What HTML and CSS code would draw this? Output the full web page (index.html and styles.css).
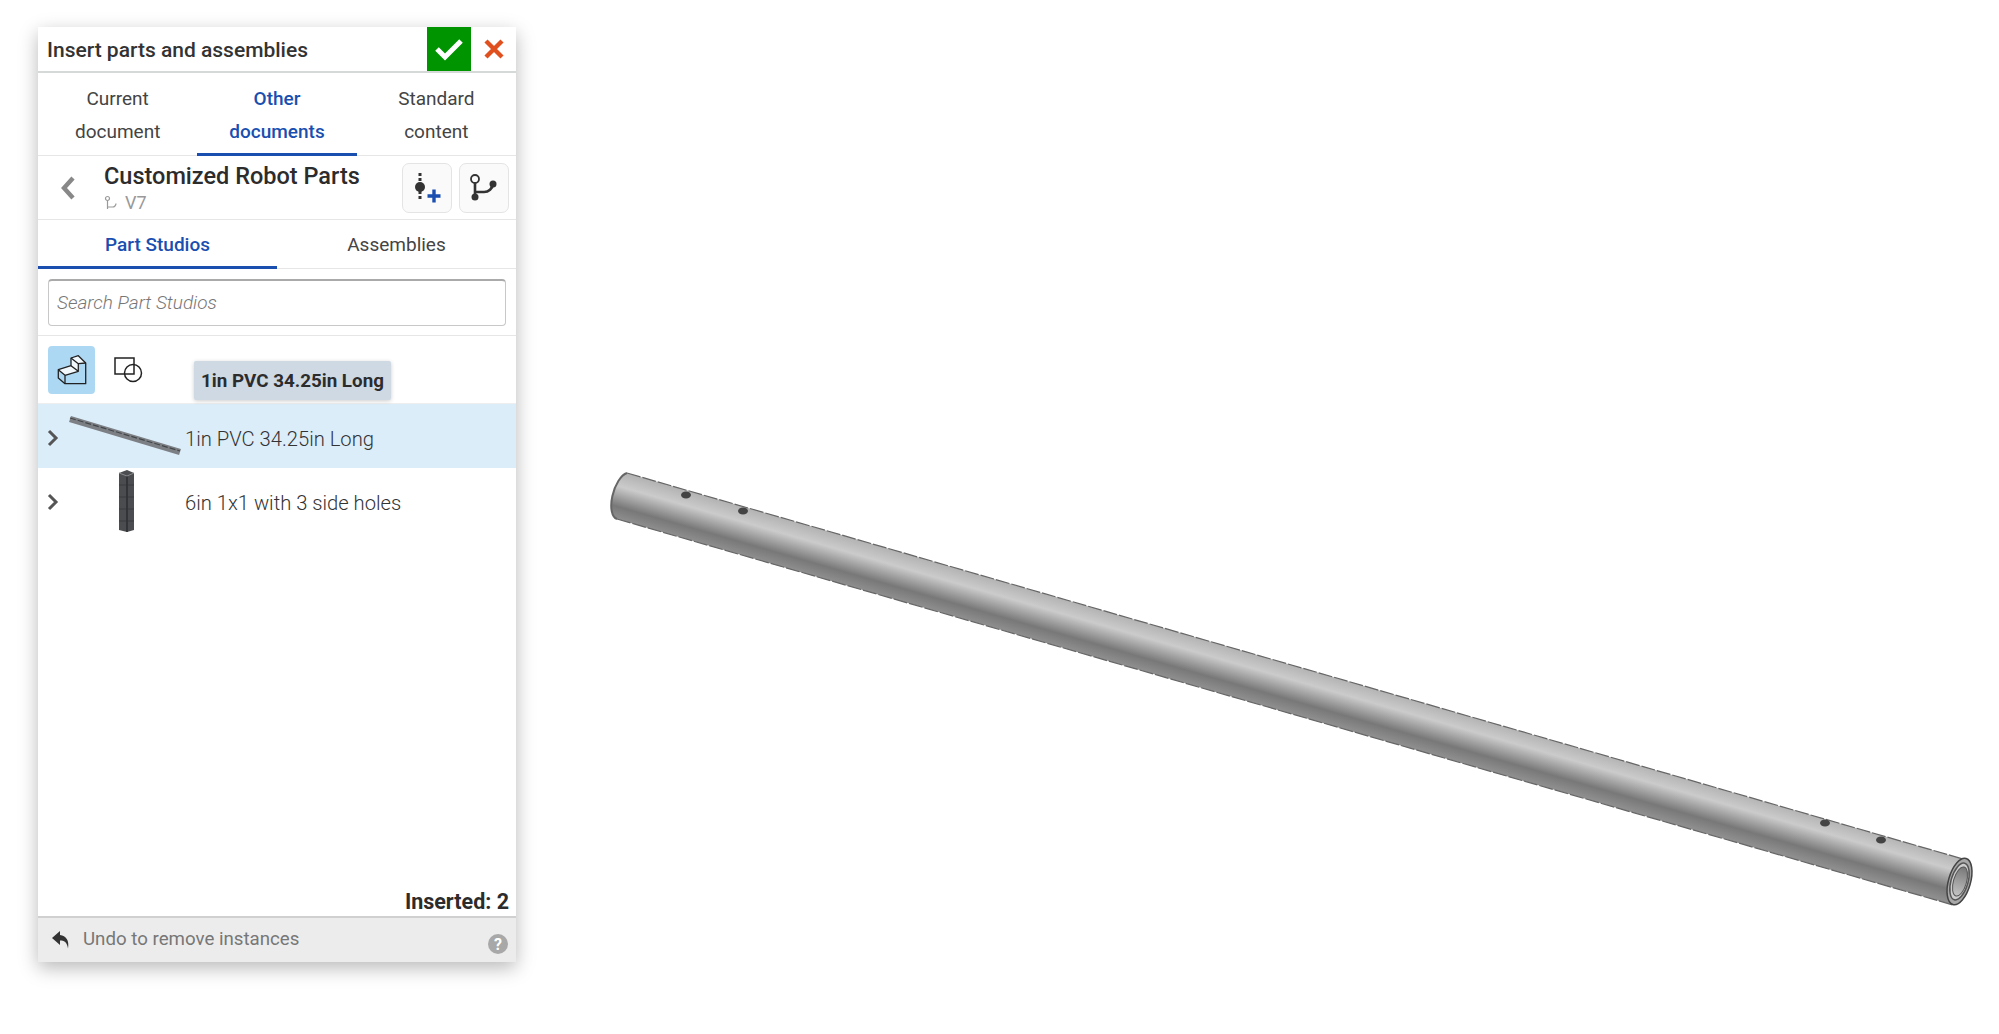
FILE: index.html
```html
<!DOCTYPE html>
<html lang="en">
<head>
<meta charset="utf-8">
<title>Insert parts and assemblies</title>
<link rel="stylesheet" href="styles.css">
</head>
<body>
<section class="panel">
  <header class="head">
    <h1 class="head-title">Insert parts and assemblies</h1>
    <button class="ok"><svg width="30" height="24" viewBox="0 0 30 24"><path d="M3 12l8 8L27 4" fill="none" stroke="#fff" stroke-width="5"/></svg></button>
    <button class="cancel"><svg width="20" height="20" viewBox="0 0 20 20"><path d="M2 2l16 16M18 2L2 18" fill="none" stroke="#e0501e" stroke-width="4.4"/></svg></button>
  </header>
  <nav class="tabs">
    <a class="tab">Current<br>document</a>
    <a class="tab tab-on">Other<br>documents</a>
    <a class="tab">Standard<br>content</a>
  </nav>
  <div class="doc">
    <svg class="back" width="16" height="26" viewBox="0 0 16 26"><path d="M13 3L4 13l9 10" fill="none" stroke="#888" stroke-width="4.4"/></svg>
    <div class="doc-text">
      <div class="doc-title">Customized Robot Parts</div>
      <div class="doc-ver"><svg width="14" height="16" viewBox="0 0 14 16"><g fill="none" stroke="#999" stroke-width="1.2"><circle cx="3.5" cy="3.5" r="2"/><path d="M3.5 5.500V14M3.5 12h5a3.500 3.500 0 0 0 3.500-3.500"/></g></svg>V7</div>
    </div>
    <button class="icon-btn"><svg width="30" height="34" viewBox="0 0 30 34"><path d="M8 2v9M8 20v10" stroke="#333" stroke-width="3" stroke-dasharray="3 2" fill="none"/><circle cx="8" cy="16" r="5" fill="#333"/><path d="M15.500 25h13M22 18.500v13" stroke="#1a4fb0" stroke-width="3.4" fill="none"/></svg></button>
    <button class="icon-btn"><svg width="28" height="30" viewBox="0 0 28 30"><g fill="none" stroke="#333"><circle cx="5" cy="6" r="4" stroke-width="1.800"/><path d="M5 10v14M5 19h9a9 9 0 0 0 9-8" stroke-width="2.600"/></g><circle cx="5" cy="24" r="3.500" fill="#333"/><circle cx="23" cy="11" r="3.500" fill="#333"/></svg></button>
  </div>
  <nav class="subtabs">
    <a class="subtab subtab-on">Part Studios</a>
    <a class="subtab">Assemblies</a>
  </nav>
  <div class="search-wrap">
    <div class="search">Search Part Studios</div>
  </div>
  <div class="filters">
    <button class="filter filter-on"><svg width="32" height="32" viewBox="0 0 32 32"><path d="M2.300 15.700L15 11.700 22.300 17.300 9 21.300zM15 4L22.300 1.700 29.700 9 22.300 9.700 22.300 17.300 15 11.700z" fill="#f2f9fd"/><g fill="none" stroke="#222" stroke-width="1.300" stroke-linejoin="round"><path d="M2.300 15.700L15 11.700V4L22.300 1.700 29.700 9V29.700H9L2.300 24z"/><path d="M2.300 15.700L9 21.300V29.700M9 21.300L22.300 17.300V9.700L15 4M22.300 9.700L29.700 9M15 11.700L22.300 17.300"/></g></svg></button>
    <button class="filter"><svg width="30" height="26" viewBox="0 0 30 26"><g fill="none" stroke="#222" stroke-width="1.500"><rect x="1" y="1" width="19" height="16"/><circle cx="19" cy="16" r="8.500"/></g></svg></button>
  </div>
  <ul class="list">
    <li class="row row-on">
      <svg class="chev" width="12" height="18" viewBox="0 0 12 18"><path d="M2 2l7 7-7 7" fill="none" stroke="#555" stroke-width="3"/></svg>
      <svg class="thumb" width="122" height="64" viewBox="0 0 122 64"><path d="M7 15L117 48" stroke="#7c8084" stroke-width="6.500" fill="none"/><path d="M7 14L117 47" stroke="#44464a" stroke-width="1.200" stroke-dasharray="6 2" fill="none"/></svg>
      <span class="row-name">1in PVC 34.25in Long</span>
    </li>
    <li class="row">
      <svg class="chev" width="12" height="18" viewBox="0 0 12 18"><path d="M2 2l7 7-7 7" fill="none" stroke="#555" stroke-width="3"/></svg>
      <svg class="thumb" width="122" height="64" viewBox="0 0 122 64"><path d="M56 5l8-3 7 3v57l-7 2-8-2z" fill="#4a4c50"/><path d="M64 8v56" stroke="#2c2d30" stroke-width="1.500"/><path d="M56 5l8 3 7-3" stroke="#888" fill="none"/><path d="M56 17h15M56 29h15M56 41h15M56 53h15" stroke="#333" stroke-width=".7"/></svg>
      <span class="row-name">6in 1x1 with 3 side holes</span>
    </li>
  </ul>
  <div class="inserted">Inserted: 2</div>
  <footer class="foot">
    <svg width="18" height="20" viewBox="0 0 18 20"><path d="M8 1L0 8l8 7v-4.500c4 0 7 1.500 8 8 1.500-8-2-13-8-13.500z" fill="#333"/></svg>
    <span class="foot-text">Undo to remove instances</span>
    <svg class="help" width="20" height="20" viewBox="0 0 20 20"><circle cx="10" cy="10" r="10" fill="#a8a8a8"/><text x="10" y="15.500" class="help-q">?</text></svg>
  </footer>
  <div class="tip">1in PVC 34.25in Long</div>
</section>
<svg class="stage" width="1483" height="1034" viewBox="516 0 1483 1034">
  <defs>
    <linearGradient id="tube" gradientUnits="userSpaceOnUse" x1="1290" y1="665" x2="1277.500" y2="708.500">
      <stop offset="0" stop-color="#b4b4b4"/>
      <stop offset=".3" stop-color="#cbcbcb"/>
      <stop offset=".74" stop-color="#787878"/>
      <stop offset="1" stop-color="#8e8e8e"/>
    </linearGradient>
    <linearGradient id="bore" x1="0" y1="0" x2="0" y2="1">
      <stop offset="0" stop-color="#777"/>
      <stop offset="1" stop-color="#c4c4c4"/>
    </linearGradient>
  </defs>
  <path d="M627 473L1963 859L1953 905L617 519A11 24 16 0 1 627 473Z" fill="url(#tube)"/>
  <path d="M627 473L1963 859" class="tube-edge"/>
  <path d="M617 519L1953 905" class="tube-edge"/>
  <path d="M627 473A11 24 16 0 0 617 519" stroke="#666" stroke-width="2" fill="none"/>
  <ellipse cx="686" cy="495" rx="5" ry="3.500" fill="#444"/>
  <ellipse cx="743" cy="511" rx="5" ry="3.500" fill="#444"/>
  <ellipse cx="1825" cy="823" rx="5" ry="3.500" fill="#444"/>
  <ellipse cx="1881" cy="840" rx="5" ry="3.500" fill="#444"/>
  <ellipse cx="1959.500" cy="881.500" rx="11" ry="24" transform="rotate(16 1959.500 881.500)" fill="#a8a8a8" stroke="#444" stroke-width="1.500"/>
  <ellipse cx="1959.500" cy="881.500" rx="8.500" ry="19" transform="rotate(16 1959.500 881.500)" fill="#ccc" stroke="#555" stroke-width="1.500"/>
  <ellipse cx="1960" cy="881.500" rx="6.500" ry="15" transform="rotate(16 1960 881.500)" fill="url(#bore)" stroke="#555"/>
</svg>
</body>
</html>
```
FILE: styles.css
```css
* { box-sizing: border-box; }
html, body { margin: 0; padding: 0; }
body {
  display: flex;
  align-items: flex-start;
  height: 1034px;
  overflow: hidden;
  background: #fff;
  font-family: Roboto, "Liberation Sans", sans-serif;
  color: #333;
}
button { border: 0; padding: 0; background: none; display: flex; align-items: center; justify-content: center; }
.panel {
  position: relative;
  flex: none;
  display: flex;
  flex-direction: column;
  width: 478px;
  height: 935px;
  margin: 27px 0 0 38px;
  background: #fff;
  box-shadow: 0 6px 18px rgba(0,0,0,.28);
}
.head { display: flex; align-items: center; height: 46px; border-bottom: 2px solid #d5dad9; flex: none; }
.head-title { flex: 1; margin: 0; padding: 2px 0 0 9px; font-size: 21px; font-weight: 500; color: #333; }
.ok { width: 44px; height: 44px; background: #009400; }
.cancel { width: 45px; height: 44px; }
.tabs { display: grid; grid-template-columns: repeat(3, 1fr); height: 83px; flex: none; border-bottom: 1px solid #e6e6e6; }
.tab { padding-top: 9px; text-align: center; font-size: 19px; line-height: 33px; color: #444; }
.tab-on { color: #1a4fb0; font-weight: 500; border-bottom: 3px solid #1a4fb0; height: 83px; }
.doc { display: flex; align-items: center; gap: 7px; height: 64px; flex: none; padding-right: 7px; border-bottom: 1px solid #e6e6e6; }
.back { margin-left: 22px; flex: none; }
.doc-text { flex: 1; padding-left: 21px; }
.doc-title { font-size: 23.5px; font-weight: 500; line-height: 28px; color: #2c2c2c; }
.doc-ver { display: flex; align-items: center; gap: 7px; margin-top: 3px; font-size: 18px; line-height: 20px; color: #999; }
.icon-btn { width: 50px; height: 50px; flex: none; border: 1px solid #e4e4e4; border-radius: 7px; background: #fafafa; }
.subtabs { display: grid; grid-template-columns: 1fr 1fr; height: 49px; flex: none; border-bottom: 1px solid #e6e6e6; }
.subtab { text-align: center; font-size: 19px; line-height: 49px; color: #444; }
.subtab-on { color: #1a4fb0; font-weight: 500; border-bottom: 3px solid #1a4fb0; height: 49px; }
.search-wrap { flex: none; height: 67px; padding: 10px 10px 0; border-bottom: 1px solid #e6e6e6; }
.search { height: 47px; padding-left: 8px; border: 1px solid #c8c8c8; border-top: 2px solid #aaa; border-radius: 4px; font-size: 19px; line-height: 44px; font-style: italic; font-weight: 300; color: #777; }
.filters { display: flex; align-items: flex-start; gap: 10px; flex: none; height: 68px; padding: 10px 0 0 10px; border-bottom: 1px solid #eee; }
.filter { width: 47px; height: 48px; border-radius: 4px; }
.filter-on { background: #add8f3; }
.list { list-style: none; margin: 0; padding: 0; flex: 1; }
.row { display: flex; align-items: center; height: 64px; }
.row-on { background: #dcedfa; }
.chev { margin: 3px 0 0 9px; flex: none; }
.thumb { margin-left: 4px; flex: none; }
.row-name { padding-top: 6px; font-size: 20.2px; font-weight: 300; color: #333; }
.inserted { flex: none; padding: 0 7px 1px 0; text-align: right; font-size: 21.5px; font-weight: 700; color: #2c2c2c; line-height: 26px; }
.foot { display: flex; align-items: center; height: 46px; flex: none; padding: 0 8px 0 14px; gap: 13px; background: #ececec; border-top: 2px solid #d0d0d0; }
.foot-text { flex: 1; margin-top: -2px; font-size: 18.7px; color: #777; }
.help { margin-top: 8px; }
.help-q { font-size: 16px; font-weight: 700; fill: #fff; text-anchor: middle; }
.tip { position: absolute; left: 156px; top: 334px; padding: 0 7px; height: 39px; background: #cfd9e4; border-radius: 2px; box-shadow: 0 1px 4px rgba(0,0,0,.2); font-size: 18.8px; font-weight: 700; line-height: 41px; color: #2c2c2c; }
.stage { flex: none; display: block; }
.tube-edge { stroke: #666; stroke-width: 1.200; stroke-dasharray: 14 2; fill: none; }
```
